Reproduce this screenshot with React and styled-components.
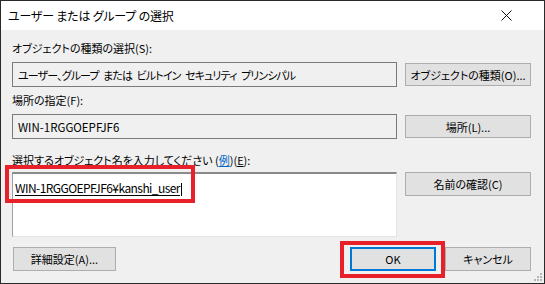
import React from "react";
import styled, { createGlobalStyle } from "styled-components";

const Global = createGlobalStyle`
  html, body { margin: 0; padding: 0; background: #ffffff; }
  body { font-family: "Noto Sans CJK JP", "Noto Sans", sans-serif; }
`;

const Window = styled.div`
  width: 545px;
  height: 284px;
  box-sizing: border-box;
  border: 1px solid #2a2a2a;
  display: flex;
  flex-direction: column;
  background: #f0f0f0;
  font-family: "Noto Sans CJK JP", "Noto Sans", sans-serif;
  font-size: 11px;
  font-feature-settings: "palt";
  color: #000;
  position: relative;
  overflow: hidden;
`;

const TitleBar = styled.div`
  height: 29px;
  flex: none;
  background: #ffffff;
  display: flex;
  align-items: center;
  justify-content: space-between;
  padding: 0 0 0 7px;
`;

const Title = styled.span`
  font-size: 12px;
  letter-spacing: -0.2px;
`;

const CloseBox = styled.div`
  width: 46px;
  height: 29px;
  display: flex;
  align-items: center;
  justify-content: center;
  margin-right: 15px;
`;

const Body = styled.div`
  flex: 1;
  display: flex;
  flex-direction: column;
  padding: 10px 13px 0 11px;
`;

const Label = styled.div`
  height: 16px;
  line-height: 16px;
  margin-top: ${(p) => p.$mt || 0}px;
  white-space: nowrap;
`;

const Row = styled.div`
  display: grid;
  grid-template-columns: 385px 126px;
  column-gap: 8px;
  align-items: ${(p) => p.$align || "center"};
  margin-top: ${(p) => p.$mt || 0}px;
`;

const ReadBox = styled.div`
  height: 25px;
  box-sizing: border-box;
  border: 1px solid #7a7a7a;
  background: #f0f0f0;
  display: flex;
  align-items: center;
  padding-left: 5px;
  white-space: pre;
  overflow: hidden;
  font-size: ${(p) => p.$fs || 11}px;
  letter-spacing: ${(p) => p.$ls || 0}px;
  word-spacing: ${(p) => p.$ws || 0}px;
`;

const Button = styled.div`
  height: ${(p) => p.$h || 23}px;
  box-sizing: border-box;
  border: ${(p) => (p.$default ? "2px solid #0078d7" : "1px solid #adadad")};
  background: #e1e1e1;
  display: flex;
  align-items: center;
  justify-content: center;
  white-space: nowrap;
  width: ${(p) => (p.$w ? p.$w + "px" : "auto")};
  margin-left: ${(p) => p.$ml || 0}px;
`;

const TextArea = styled.div`
  height: 65px;
  box-sizing: border-box;
  background: #ffffff;
  border-top: 2px solid #8a8a8a;
  border-left: 1px solid #a0a0a0;
  border-right: 1px solid #e3e3e3;
  border-bottom: 1px solid #e3e3e3;
  padding: 5px 0 0 2px;
  position: relative;
`;

const Entry = styled.span`
  text-decoration: underline;
  text-underline-offset: 2px;
  font-size: 12px;
  letter-spacing: -0.56px;
`;

const Caret = styled.span`
  display: inline-block;
  width: 1px;
  height: 13px;
  background: #000;
  vertical-align: -3px;
  margin-left: 1px;
`;

const Highlight = styled.div`
  position: absolute;
  border: 4px solid #e8202a;
  box-sizing: border-box;
  pointer-events: none;
`;

const LinkText = styled.span`
  color: #0066cc;
  text-decoration: underline;
`;

const U = styled.span`
  text-decoration: underline;
`;

const BottomRow = styled.div`
  display: flex;
  align-items: center;
  margin-top: 10px;
  padding-left: 1px;
`;

const Spacer = styled.div`
  flex: 1;
`;

const Grip = styled.svg`
  position: absolute;
  right: 1px;
  bottom: 1px;
`;

export default function App() {
  return (
    <>
      <Global />
      <Window>
        <TitleBar>
          <Title>ユーザー または グループ の選択</Title>
          <CloseBox>
            <svg width="11" height="11" viewBox="0 0 11 11">
              <path d="M0.5 0.5 L10.5 10.5 M10.5 0.5 L0.5 10.5" stroke="#111" strokeWidth="1" fill="none" />
            </svg>
          </CloseBox>
        </TitleBar>
        <Body>
          <Label>オブジェクトの種類の選択(S):</Label>
          <Row $mt={6}>
            <ReadBox $ls={-0.9} $ws={3}>ユーザー、グループ または ビルトイン セキュリティ プリンシパル</ReadBox>
            <Button>オブジェクトの種類(O)...</Button>
          </Row>
          <Label $mt={5}>場所の指定(F):</Label>
          <Row $mt={6}>
            <ReadBox $fs={11.5}>WIN-1RGGOEPFJF6</ReadBox>
            <Button>場所(L)...</Button>
          </Row>
          <Label $mt={13}>
            選択するオブジェクト名を入力してください (<LinkText>例</LinkText>)(<U>E</U>):
          </Label>
          <Row $mt={4} $align="start">
            <TextArea>
              <Entry>WIN-1RGGOEPFJF6¥kanshi_user</Entry>
              <Caret />
            </TextArea>
            <Button $h={24}>名前の確認(C)</Button>
          </Row>
          <BottomRow>
            <Button $w={103} $h={24}>詳細設定(A)...</Button>
            <Spacer />
            <Button $w={86} $h={24} $default>OK</Button>
            <Button $w={86} $h={24} $ml={9}>キャンセル</Button>
          </BottomRow>
        </Body>
        <Highlight style={{ left: 4, top: 164, width: 190, height: 38 }} />
        <Highlight style={{ left: 339, top: 240, width: 105, height: 37 }} />
        <Grip width="10" height="10" viewBox="0 0 10 10">
          <g fill="#b8b8b8">
            <rect x="7" y="1" width="2" height="2" />
            <rect x="4" y="4" width="2" height="2" />
            <rect x="7" y="4" width="2" height="2" />
            <rect x="1" y="7" width="2" height="2" />
            <rect x="4" y="7" width="2" height="2" />
            <rect x="7" y="7" width="2" height="2" />
          </g>
        </Grip>
      </Window>
    </>
  );
}
